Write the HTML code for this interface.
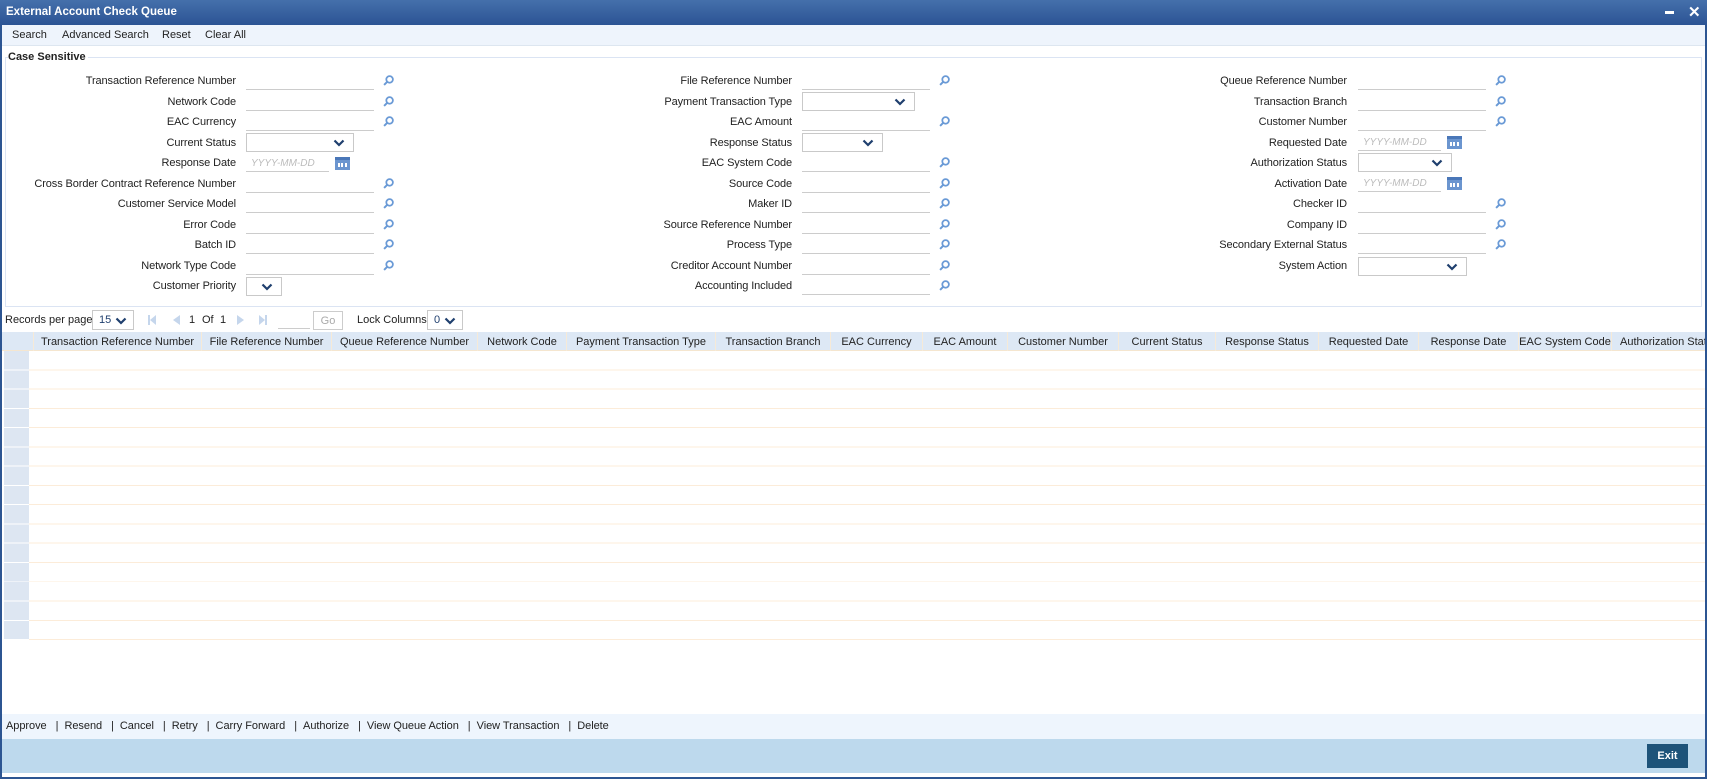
<!DOCTYPE html>
<html><head><meta charset="utf-8"><style>
*{box-sizing:border-box;margin:0;padding:0}
body{width:1709px;height:781px;background:#fff;font-family:"Liberation Sans",Arial,sans-serif;font-size:11px;color:#222;position:relative;overflow:hidden}
.a{position:absolute}
.win{left:0;top:0;width:1707px;height:779px;border:2px solid #2c5592;border-top:none}
.title{left:0;top:0;width:1707px;height:25px;background:linear-gradient(#4570ab,#2b5394);color:#fff;font-weight:bold;font-size:11.5px;padding:6px 0 0 6px}
.tb{left:2px;top:25px;width:1703px;height:21px;background:#eef4fc;border-bottom:1px solid #dde6f0}
.tb span{position:absolute;top:4px}
.fs{left:5px;top:57px;width:1697px;height:250px;border:1px solid #dbe4f3}
.lg{left:8px;top:51px;background:#fff;font-weight:bold;padding-right:2px}
.l{position:absolute;text-align:right;width:320px;white-space:nowrap;letter-spacing:-0.1px}
.c1{right:1473px}.c2{right:917px}.c3{right:362px}
.i{position:absolute;height:18px;width:128px;border-bottom:1px solid #ccc}
.x1{left:246px}.x2{left:802px}.x3{left:1358px}
.d{position:absolute;height:19px;border:1px solid #c9c9c9;background:#fff}
.d svg{position:absolute;right:8px;top:5px}
.dt{position:absolute;height:18px;width:83px;border-bottom:1px solid #ccc;color:#bbb;font-style:italic;font-size:10px;padding:4px 0 0 5px}
.s{position:absolute}
.cal{position:absolute;width:15px;height:13px;background:#6b95cf;border-top:3px solid #4a77b8}
.cal:after{content:"";position:absolute;left:3px;top:3px;width:9px;border-top:2px dotted #fff;border-bottom:2px dotted #fff;box-sizing:content-box;height:0}
.hd{left:2px;top:332px;width:1703px;height:19px;background:#dde8f5;border-bottom:1px solid #f5e6cf;white-space:nowrap}
.hd span{position:absolute;top:0;height:19px;padding-top:4px;text-align:center;border-left:1px solid #f6ead8;overflow:hidden}
.rows{left:29px;top:351px;width:1676px;height:289px;background:repeating-linear-gradient(#fff 0,#fff 18.3px,#fcecd9 18.3px,#fcecd9 19.27px)}
.chk{left:4px;top:351px;width:25px;height:289px;background:repeating-linear-gradient(#dde6f2 0,#dde6f2 18.3px,#fff 18.3px,#fff 19.27px)}
.act{left:2px;top:714px;width:1703px;height:25px;background:#eef5fd;padding:6px 0 0 4px;white-space:nowrap;letter-spacing:-0.05px}
.blue{left:2px;top:739px;width:1703px;height:34px;background:#bdd9ed}
.exit{left:1647px;top:744px;width:41px;height:24px;background:#1d5379;color:#fff;font-weight:bold;text-align:center;padding-top:6px}
.pg{top:314px}
</style></head><body>
<svg width="0" height="0" style="position:absolute"><defs>
<symbol id="q" viewBox="0 0 10 10"><circle cx="6" cy="4" r="3" fill="none" stroke="#6a9ad6" stroke-width="1.6"/><line x1="3.8" y1="6.2" x2="1" y2="9" stroke="#6a9ad6" stroke-width="1.8"/></symbol>
<symbol id="v" viewBox="0 0 12 8"><polyline points="1.5,1.5 6,6 10.5,1.5" fill="none" stroke="#1f3f6e" stroke-width="2.2"/></symbol>
</defs></svg>
<div class="a win"></div>
<div class="a title">External Account Check Queue<span style="position:absolute;left:1665px;top:11px;width:9px;height:3px;background:#fff"></span><span style="position:absolute;left:1688px;top:3px;font-size:15px">✕</span></div>
<div class="a tb"><span style="left:10px">Search</span><span style="left:60px">Advanced Search</span><span style="left:160px">Reset</span><span style="left:203px">Clear All</span></div>
<div class="a fs"></div>
<div class="a lg">Case Sensitive</div>

<div class="l c1" style="top:75px">Transaction Reference Number</div><div class="i x1" style="top:72px"></div>
<div class="l c1" style="top:96px">Network Code</div><div class="i x1" style="top:93px"></div>
<div class="l c1" style="top:116px">EAC Currency</div><div class="i x1" style="top:113px"></div>
<div class="l c1" style="top:137px">Current Status</div><div class="d" style="left:246px;top:133px;width:108px"><svg width="12" height="8"><use href="#v"/></svg></div>
<div class="l c1" style="top:157px">Response Date</div><div class="dt" style="left:246px;top:154px">YYYY-MM-DD</div><div class="cal" style="left:335px;top:157px"></div>
<div class="l c1" style="top:178px">Cross Border Contract Reference Number</div><div class="i x1" style="top:175px"></div>
<div class="l c1" style="top:198px">Customer Service Model</div><div class="i x1" style="top:195px"></div>
<div class="l c1" style="top:219px">Error Code</div><div class="i x1" style="top:216px"></div>
<div class="l c1" style="top:239px">Batch ID</div><div class="i x1" style="top:236px"></div>
<div class="l c1" style="top:260px">Network Type Code</div><div class="i x1" style="top:257px"></div>
<div class="l c1" style="top:280px">Customer Priority</div><div class="d" style="left:246px;top:277px;width:36px"><svg width="12" height="8"><use href="#v"/></svg></div>
<svg class="s" style="left:383px;top:75px" width="11" height="11"><use href="#q"/></svg>
<svg class="s" style="left:383px;top:96px" width="11" height="11"><use href="#q"/></svg>
<svg class="s" style="left:383px;top:116px" width="11" height="11"><use href="#q"/></svg>
<svg class="s" style="left:383px;top:178px" width="11" height="11"><use href="#q"/></svg>
<svg class="s" style="left:383px;top:198px" width="11" height="11"><use href="#q"/></svg>
<svg class="s" style="left:383px;top:219px" width="11" height="11"><use href="#q"/></svg>
<svg class="s" style="left:383px;top:239px" width="11" height="11"><use href="#q"/></svg>
<svg class="s" style="left:383px;top:260px" width="11" height="11"><use href="#q"/></svg>

<div class="l c2" style="top:75px">File Reference Number</div><div class="i x2" style="top:72px"></div>
<div class="l c2" style="top:96px">Payment Transaction Type</div><div class="d" style="left:802px;top:92px;width:113px"><svg width="12" height="8"><use href="#v"/></svg></div>
<div class="l c2" style="top:116px">EAC Amount</div><div class="i x2" style="top:113px"></div>
<div class="l c2" style="top:137px">Response Status</div><div class="d" style="left:802px;top:133px;width:81px"><svg width="12" height="8"><use href="#v"/></svg></div>
<div class="l c2" style="top:157px">EAC System Code</div><div class="i x2" style="top:154px"></div>
<div class="l c2" style="top:178px">Source Code</div><div class="i x2" style="top:175px"></div>
<div class="l c2" style="top:198px">Maker ID</div><div class="i x2" style="top:195px"></div>
<div class="l c2" style="top:219px">Source Reference Number</div><div class="i x2" style="top:216px"></div>
<div class="l c2" style="top:239px">Process Type</div><div class="i x2" style="top:236px"></div>
<div class="l c2" style="top:260px">Creditor Account Number</div><div class="i x2" style="top:257px"></div>
<div class="l c2" style="top:280px">Accounting Included</div><div class="i x2" style="top:277px"></div>
<svg class="s" style="left:939px;top:75px" width="11" height="11"><use href="#q"/></svg>
<svg class="s" style="left:939px;top:116px" width="11" height="11"><use href="#q"/></svg>
<svg class="s" style="left:939px;top:157px" width="11" height="11"><use href="#q"/></svg>
<svg class="s" style="left:939px;top:178px" width="11" height="11"><use href="#q"/></svg>
<svg class="s" style="left:939px;top:198px" width="11" height="11"><use href="#q"/></svg>
<svg class="s" style="left:939px;top:219px" width="11" height="11"><use href="#q"/></svg>
<svg class="s" style="left:939px;top:239px" width="11" height="11"><use href="#q"/></svg>
<svg class="s" style="left:939px;top:260px" width="11" height="11"><use href="#q"/></svg>
<svg class="s" style="left:939px;top:280px" width="11" height="11"><use href="#q"/></svg>

<div class="l c3" style="top:75px">Queue Reference Number</div><div class="i x3" style="top:72px"></div>
<div class="l c3" style="top:96px">Transaction Branch</div><div class="i x3" style="top:93px"></div>
<div class="l c3" style="top:116px">Customer Number</div><div class="i x3" style="top:113px"></div>
<div class="l c3" style="top:137px">Requested Date</div><div class="dt" style="left:1358px;top:133px">YYYY-MM-DD</div><div class="cal" style="left:1447px;top:136px"></div>
<div class="l c3" style="top:157px">Authorization Status</div><div class="d" style="left:1358px;top:153px;width:94px"><svg width="12" height="8"><use href="#v"/></svg></div>
<div class="l c3" style="top:178px">Activation Date</div><div class="dt" style="left:1358px;top:174px">YYYY-MM-DD</div><div class="cal" style="left:1447px;top:177px"></div>
<div class="l c3" style="top:198px">Checker ID</div><div class="i x3" style="top:195px"></div>
<div class="l c3" style="top:219px">Company ID</div><div class="i x3" style="top:216px"></div>
<div class="l c3" style="top:239px">Secondary External Status</div><div class="i x3" style="top:236px"></div>
<div class="l c3" style="top:260px">System Action</div><div class="d" style="left:1358px;top:257px;width:109px"><svg width="12" height="8"><use href="#v"/></svg></div>
<svg class="s" style="left:1495px;top:75px" width="11" height="11"><use href="#q"/></svg>
<svg class="s" style="left:1495px;top:96px" width="11" height="11"><use href="#q"/></svg>
<svg class="s" style="left:1495px;top:116px" width="11" height="11"><use href="#q"/></svg>
<svg class="s" style="left:1495px;top:198px" width="11" height="11"><use href="#q"/></svg>
<svg class="s" style="left:1495px;top:219px" width="11" height="11"><use href="#q"/></svg>
<svg class="s" style="left:1495px;top:239px" width="11" height="11"><use href="#q"/></svg>

<div class="a pg" style="left:5px">Records per page</div>
<div class="d" style="left:92px;top:310px;width:42px;height:20px;color:#1f3f6e;padding:3px 0 0 6px">15<svg width="12" height="8" style="top:6px;right:6px"><use href="#v"/></svg></div>
<div class="a" style="left:148px;top:315px;width:2px;height:10px;background:#c5d6ec"></div><div class="a" style="left:150px;top:315px;border:5px solid transparent;border-right:6px solid #c5d6ec;border-left:0"></div>
<div class="a" style="left:173px;top:315px;border:5px solid transparent;border-right:7px solid #c5d6ec;border-left:0"></div>
<div class="a pg" style="left:189px">1</div><div class="a pg" style="left:202px">Of</div><div class="a pg" style="left:220px">1</div>
<div class="a" style="left:237px;top:315px;border:5px solid transparent;border-left:7px solid #c5d6ec;border-right:0"></div>
<div class="a" style="left:259px;top:315px;border:5px solid transparent;border-left:6px solid #c5d6ec;border-right:0"></div><div class="a" style="left:265px;top:315px;width:2px;height:10px;background:#c5d6ec"></div>
<div class="a" style="left:278px;top:311px;width:32px;height:18px;border-bottom:1px solid #ccc"></div>
<div class="a" style="left:313px;top:311px;width:30px;height:19px;border:1px solid #ccc;color:#aaa;text-align:center;padding-top:3px">Go</div>
<div class="a pg" style="left:357px">Lock Columns</div>
<div class="d" style="left:427px;top:310px;width:36px;height:20px;color:#1f3f6e;padding:3px 0 0 6px">0<svg width="12" height="8" style="top:6px;right:6px"><use href="#v"/></svg></div>

<div class="a hd">
<span style="left:0;width:31px;border:none"></span>
<span style="left:31px;width:168px">Transaction Reference Number</span>
<span style="left:199px;width:130px">File Reference Number</span>
<span style="left:329px;width:146px">Queue Reference Number</span>
<span style="left:475px;width:89px">Network Code</span>
<span style="left:564px;width:149px">Payment Transaction Type</span>
<span style="left:713px;width:115px">Transaction Branch</span>
<span style="left:828px;width:92px">EAC Currency</span>
<span style="left:920px;width:85px">EAC Amount</span>
<span style="left:1005px;width:111px">Customer Number</span>
<span style="left:1116px;width:97px">Current Status</span>
<span style="left:1213px;width:103px">Response Status</span>
<span style="left:1316px;width:100px">Requested Date</span>
<span style="left:1416px;width:100px">Response Date</span>
<span style="left:1516px;width:93px">EAC System Code</span>
<span style="left:1609px;width:94px;text-align:left;padding-left:8px">Authorization Status</span>
</div>
<div class="a rows"></div>
<div class="a chk"></div>
<div class="a act">Approve &nbsp; | &nbsp;Resend &nbsp; | &nbsp;Cancel &nbsp; | &nbsp;Retry &nbsp; | &nbsp;Carry Forward &nbsp; | &nbsp;Authorize &nbsp; | &nbsp;View Queue Action &nbsp; | &nbsp;View Transaction &nbsp; | &nbsp;Delete</div>
<div class="a blue"></div>
<div class="a exit">Exit</div>
</body></html>
